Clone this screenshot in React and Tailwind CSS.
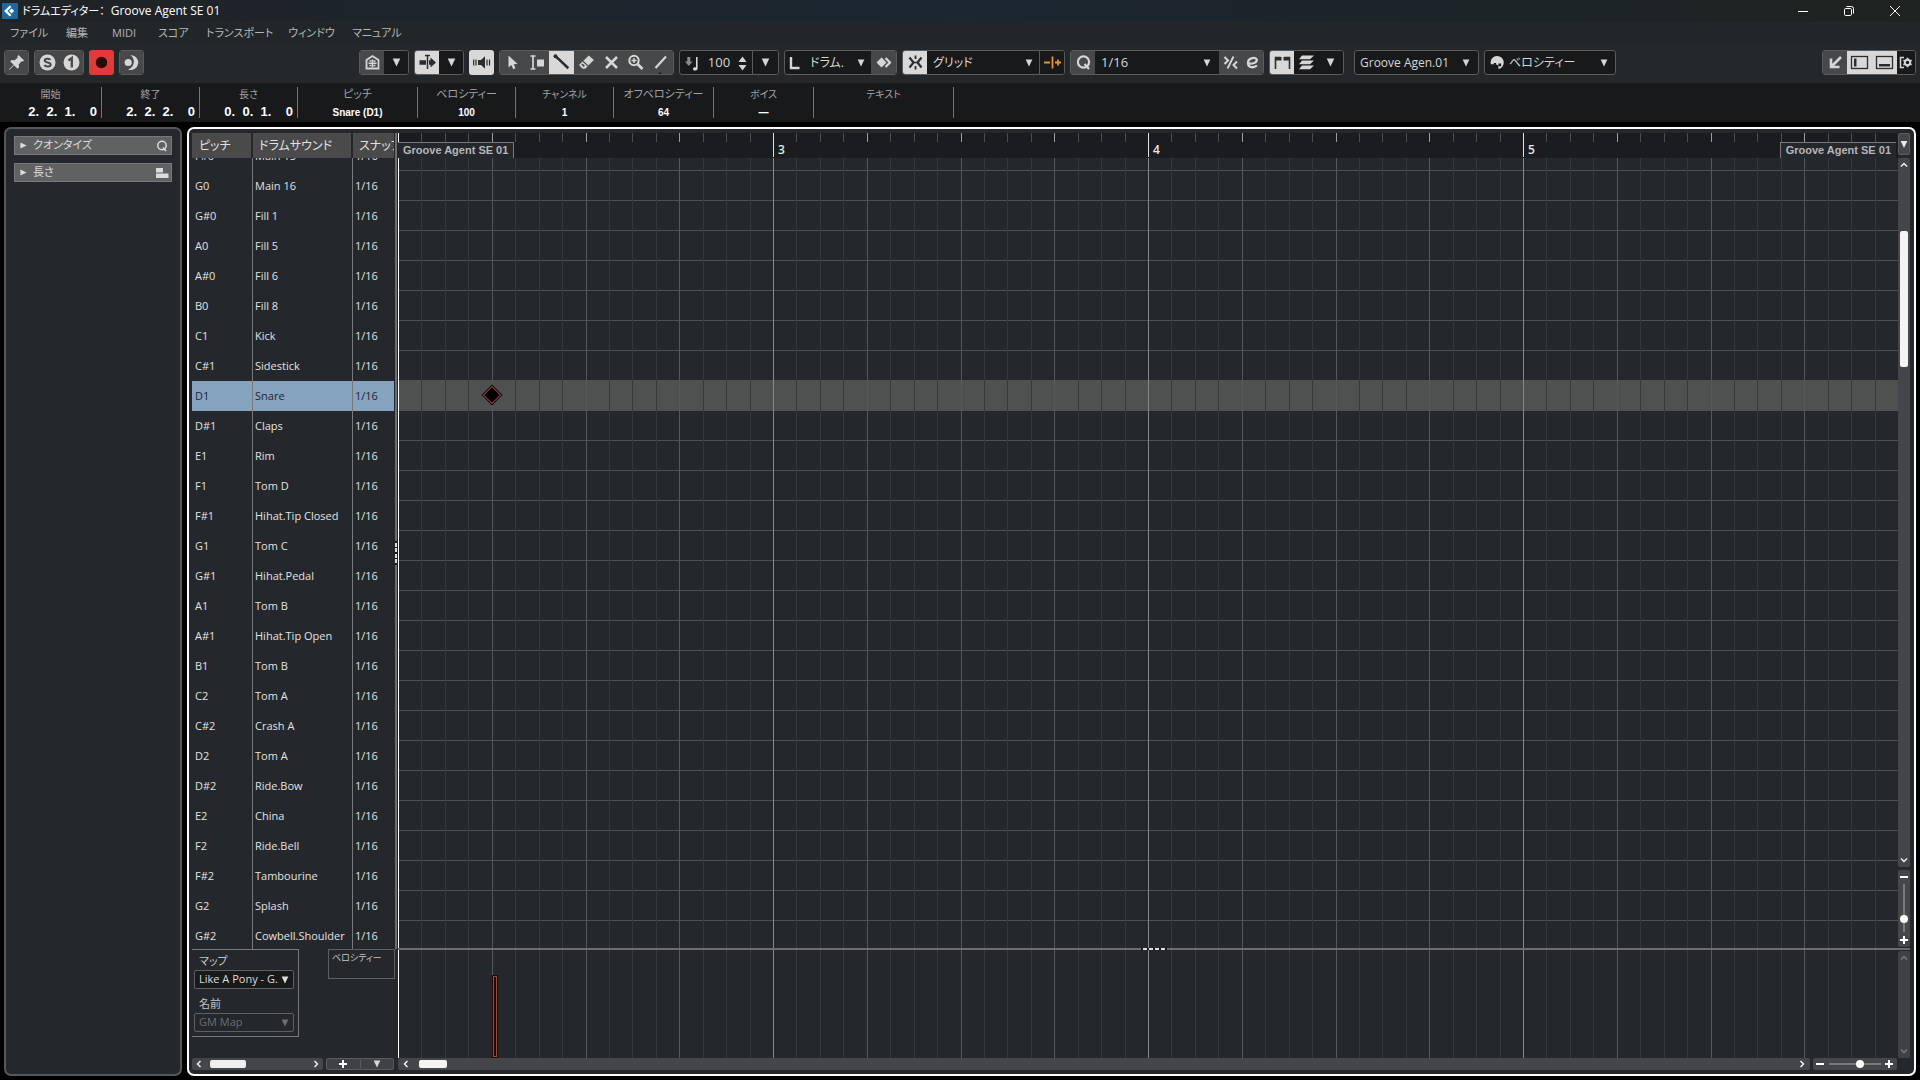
import React, { useLayoutEffect, useRef, useState } from 'react';

const DRUMS = [
    ['F#0', 'Main 15'],
    ['G0', 'Main 16'],
    ['G#0', 'Fill 1'],
    ['A0', 'Fill 5'],
    ['A#0', 'Fill 6'],
    ['B0', 'Fill 8'],
    ['C1', 'Kick'],
    ['C#1', 'Sidestick'],
    ['D1', 'Snare'],
    ['D#1', 'Claps'],
    ['E1', 'Rim'],
    ['F1', 'Tom D'],
    ['F#1', 'Hihat.Tip Closed'],
    ['G1', 'Tom C'],
    ['G#1', 'Hihat.Pedal'],
    ['A1', 'Tom B'],
    ['A#1', 'Hihat.Tip Open'],
    ['B1', 'Tom B'],
    ['C2', 'Tom A'],
    ['C#2', 'Crash A'],
    ['D2', 'Tom A'],
    ['D#2', 'Ride.Bow'],
    ['E2', 'China'],
    ['F2', 'Ride.Bell'],
    ['F#2', 'Tambourine'],
    ['G2', 'Splash'],
    ['G#2', 'Cowbell.Shoulder'],
];

const MENUS = [
    { name: 'ファイル', width: 'w-[56px]' },
    { name: '編集', width: 'w-[46px]' },
    { name: 'MIDI', width: 'w-[46px]' },
    { name: 'スコア', width: 'w-[48px]' },
    { name: 'トランスポート', width: 'w-[82px]' },
    { name: 'ウィンドウ', width: 'w-[64px]' },
    { name: 'マニュアル', width: 'w-[64px]' },
];

const INFO = [
    { id: 'start', label: '開始', value: '2.  2.  1.    0', width: 'w-[102px]', time: true, size: 'text-[10px]' },
    { id: 'end', label: '終了', value: '2.  2.  2.    0', width: 'w-[98px]', time: true, size: 'text-[10px]' },
    { id: 'length', label: '長さ', value: '0.  0.  1.    0', width: 'w-[98px]', time: true, size: 'text-[10px]' },
    { id: 'pitch', label: 'ピッチ', value: 'Snare (D1)', width: 'w-[120px]', size: 'text-[11px]' },
    { id: 'velocity', label: 'ベロシティー', value: '100', width: 'w-[98px]', size: 'text-[11px]' },
    { id: 'channel', label: 'チャンネル', value: '1', width: 'w-[98px]', size: 'text-[10px]' },
    { id: 'offvel', label: 'オフベロシティー', value: '64', width: 'w-[100px]', size: 'text-[11px]' },
    { id: 'voice', label: 'ボイス', value: '—', width: 'w-[100px]', size: 'text-[10px]' },
    { id: 'text', label: 'テキスト', value: '', width: 'w-[140px]', size: 'text-[10px]' },
];

const STEPS = Array.from({ length: 64 }, (_, i) => i);
const NOTE_STEP = 4;
const LIST_SCROLL = 17;

const Icon = ({ children, className = 'h-[25px] w-[25px]', box = '0 0 25 25' }) => (
    <svg viewBox={box} className={`shrink-0 ${className}`} fill="currentColor" aria-hidden="true">
        {children}
    </svg>
);

const Caret = ({ className = 'h-[9px] w-[9px]' }) => (
    <svg viewBox="0 0 9 9" className={className} fill="currentColor" aria-hidden="true">
        <path d="M0.7 0.5h7.6L4.5 8.5z" />
    </svg>
);

const Group = ({ width, children }) => (
    <div className={`flex h-[25px] shrink-0 overflow-hidden rounded-[3px] border border-[#5a5b5d] bg-[#18191b] ${width}`}>
        {children}
    </div>
);

const ToolButton = ({ label, tone = 'gray', className = 'flex-1', children }) => {
    const tones = {
        gray: 'bg-[#47484a] text-[#d6d6d6]',
        light: 'bg-[#d8d8d8] text-[#2b2c2e]',
        dark: 'bg-[#18191b] text-[#d6d6d6]',
        red: 'bg-[#e23a38] text-[#2a0808]',
    };
    return (
        <button type="button" aria-label={label} title={label} className={`flex items-center justify-center overflow-hidden ${tones[tone]} ${className}`}>
            {children}
        </button>
    );
};

const Picker = ({ label, options, className = 'flex-1', textSize = 'text-[13px]', pad = 'pl-1', disabled = false, caret = 'mr-2' }) => (
    <label className={`grid min-w-0 items-center ${className}`}>
        <select
            aria-label={label}
            disabled={disabled}
            className={`col-start-1 row-start-1 h-full w-full min-w-0 appearance-none bg-transparent outline-none ${pad} ${textSize}`}
        >
            {options.map((o) => (
                <option key={o}>{o}</option>
            ))}
        </select>
        <span className={`pointer-events-none col-start-1 row-start-1 justify-self-end ${caret}`}>
            <Caret className="h-2 w-2" />
        </span>
    </label>
);

const TitleBar = () => (
    <header className="flex h-[22px] items-center bg-gradient-to-r from-[#1f2326] via-[#1b2631] to-[#1e2220] pl-[2px] text-white">
        <Icon box="0 0 16 16" className="h-4 w-4 rounded-[1px]">
            <rect width="16" height="16" fill="#1f6a9c" />
            <path d="M8.6 3.2 3.8 8l4.8 4.8" fill="none" stroke="#fff" strokeWidth="2.3" />
            <path d="M9.6 5.4 12.2 8l-2.6 2.6L7 8z" fill="#fff" />
        </Icon>
        <h1 className="ml-1 flex items-center gap-[6px] whitespace-nowrap text-[12px]">
            <span className="text-[11px]">ドラムエディター：</span>
            <span>Groove Agent SE 01</span>
        </h1>
        <div className="ml-auto flex items-center pr-[2px]">
            <button type="button" aria-label="最小化" className="flex w-[46px] justify-center">
                <Icon box="0 0 10 10" className="h-[10px] w-[10px]"><path d="M0 5h10v1H0z" /></Icon>
            </button>
            <button type="button" aria-label="元に戻す" className="flex w-[46px] justify-center">
                <Icon box="0 0 10 10" className="h-[10px] w-[10px]">
                    <rect x="0.5" y="2.5" width="7" height="7" rx="1.2" fill="none" stroke="currentColor" />
                    <path d="M2.5 0.5h5a2 2 0 0 1 2 2v5" fill="none" stroke="currentColor" />
                </Icon>
            </button>
            <button type="button" aria-label="閉じる" className="flex w-[46px] justify-center">
                <Icon box="0 0 10 10" className="h-[10px] w-[10px]"><path d="m0 0 10 10M10 0 0 10" stroke="currentColor" /></Icon>
            </button>
        </div>
    </header>
);

const MenuBar = () => (
    <nav className="flex h-[22px] items-center bg-[#222629] pl-[10px] text-[#b4b6b8]">
        {MENUS.map((m) => (
            <button key={m.name} type="button" className={`whitespace-nowrap text-left text-[11px] ${m.width}`}>
                {m.name}
            </button>
        ))}
    </nav>
);

const Toolbar = () => (
    <div className="flex h-[39px] items-start gap-[5px] bg-[#25282b] px-1 pt-[6px] text-[#d6d6d6]">
        <Group width="w-[25px]">
            <ToolButton label="固定">
                <Icon>
                    <path d="m14.5 5 5.6 5.6-1.4 1-1-.3-2.9 2.9.2 3.3-1.5 1.2-3.5-3.5-4.5 4.6-.5-.5 4.6-4.5-3.3-3.3 1.3-1.4 3.200.2 2.9-2.9-.3-1.1z" />
                </Icon>
            </ToolButton>
        </Group>
        <Group width="w-[50px]">
            <ToolButton label="ソロ">
                <Icon>
                    <circle cx="12.5" cy="12.5" r="8" />
                    <path d="M15.5 9.800c-1-1.5-5.8-1.7-5.8.7 0 2.5 6 1.3 6 4 0 2.6-5 2.5-6.4.6" fill="none" stroke="#47484a" strokeWidth="2" />
                </Icon>
            </ToolButton>
            <ToolButton label="フィードバック">
                <Icon>
                    <circle cx="12.5" cy="12.5" r="8" />
                    <path d="M9.5 10.5 12.8 8v9.5" fill="none" stroke="#47484a" strokeWidth="2.3" />
                </Icon>
            </ToolButton>
        </Group>
        <ToolButton label="録音" tone="red" className="h-[25px] w-[25px] shrink-0 rounded-[3px]">
            <Icon><circle cx="12.5" cy="12.5" r="5.7" /></Icon>
        </ToolButton>
        <Group width="w-[25px]">
            <ToolButton label="レトロスペクティブ録音">
                <Icon>
                    <path d="M11.5 5.2a7.4 7.4 0 1 1-2.5 14.2 8 8 0 0 0 2.5-14.2z" />
                    <circle cx="9.2" cy="12.5" r="3.6" />
                </Icon>
            </ToolButton>
        </Group>

        <div className="w-[205px]" />

        <Group width="w-[50px]">
            <ToolButton label="エディターツール">
                <Icon>
                    <path d="M6.5 18.5V10l6-4 6 4v8.5z" fill="none" stroke="currentColor" strokeWidth="1.8" />
                    <path d="M9.5 11h2M13.5 11h2M9.5 15.5h2M13.500 15.500h2M8.500 13.200h8M12.500 9.500v8" stroke="currentColor" strokeWidth="1.4" />
                </Icon>
            </ToolButton>
            <ToolButton label="ツールメニュー" tone="dark"><Caret /></ToolButton>
        </Group>
        <Group width="w-[50px]">
            <ToolButton label="自動スクロール" tone="light">
                <Icon>
                    <path d="M4.5 10.2h6.5v4.6H4.5zM14 10.2h1.5V7.5l5.5 5-5.5 5v-2.7H14z" />
                    <path d="M12.5 6v13M10 5.5h5" stroke="currentColor" strokeWidth="1.5" />
                </Icon>
            </ToolButton>
            <ToolButton label="スクロール設定" tone="dark"><Caret /></ToolButton>
        </Group>
        <ToolButton label="試聴" tone="light" className="h-[25px] w-[25px] shrink-0 rounded-[3px]">
            <Icon>
                <path d="M9 10h3l4-3.800v12.600L12 15H9z" />
                <path d="M4.7 9.5v6M7 9.5v6M18 9.5v6M20.5 9.5v6" stroke="currentColor" strokeWidth="1.2" />
            </Icon>
        </ToolButton>
        <Group width="w-[175px]">
            <ToolButton label="選択">
                <Icon><path d="M8.5 5.5v12l2.9-2.4 1.8 4.1 2.3-1-1.8-4 3.8-.3z" /></Icon>
            </ToolButton>
            <ToolButton label="トリム">
                <Icon>
                    <path d="M5.5 6h5M5.500 19h5M8 6v13" fill="none" stroke="currentColor" strokeWidth="1.7" />
                    <path d="M12 9.500h7v7h-7z" />
                </Icon>
            </ToolButton>
            <ToolButton label="ドラムスティック" tone="light">
                <Icon>
                    <circle cx="6.5" cy="6.3" r="2" />
                    <path d="m6.5 6.3 3 2.6 9.8 9.3" fill="none" stroke="currentColor" strokeWidth="2.6" />
                </Icon>
            </ToolButton>
            <ToolButton label="削除">
                <Icon>
                    <path d="m14.8 5.5 5 4.6-8.6 8.6H8.600L5 15z" />
                    <path d="m9 11.2 5 4.7" stroke="#47484a" strokeWidth="1.2" />
                    <path d="m7.3 14.8 2.4 2.2 1.2-1.2-2.4-2.2z" fill="#47484a" />
                </Icon>
            </ToolButton>
            <ToolButton label="ミュート">
                <Icon><path d="m7 7 11 11M18 7 7 18" stroke="currentColor" strokeWidth="2.5" /></Icon>
            </ToolButton>
            <ToolButton label="ズーム">
                <Icon>
                    <circle cx="11" cy="10.5" r="4.7" fill="none" stroke="currentColor" strokeWidth="2" />
                    <path d="M11 8v5M8.5 10.5h5" stroke="currentColor" strokeWidth="1.5" />
                    <path d="m14.5 14 5 5" stroke="currentColor" strokeWidth="2.8" />
                </Icon>
            </ToolButton>
            <ToolButton label="ライン">
                <Icon>
                    <path d="M18 6.5 7.5 18" stroke="currentColor" strokeWidth="2.2" />
                    <path d="m12 22 3 3H9z" fill="#18191b" />
                </Icon>
            </ToolButton>
        </Group>
        <Group width="w-[100px]">
            <Icon>
                <path d="M7.3 6v4.5H5l3.8 4.5 3.8-4.5h-2.300V6z" opacity=".6" />
                <path d="M16 6h1.600v11.500c0 2.500-4.600 2.700-4.600.5 0-1.500 1.800-2 3-1.500z" />
            </Icon>
            <input aria-label="挿入ベロシティー" defaultValue="100" className="w-[28px] min-w-0 bg-transparent text-center text-[13px] outline-none" />
            <Icon className="h-[25px] w-[19px]" box="0 0 17 25">
                <path d="M8.5 5.5 12.5 11h-8zM8.5 19.5l4-5.5h-8z" />
            </Icon>
            <ToolButton label="ベロシティーメニュー" tone="dark" className="flex-1 border-l border-[#5a5b5d]"><Caret /></ToolButton>
        </Group>
        <Group width="w-[113px]">
            <Icon className="h-[23px] w-[19px]" box="0 0 19 23">
                <path d="M6 6v11h8.5" fill="none" stroke="currentColor" strokeWidth="2.4" />
            </Icon>
            <Picker label="ノートの長さ" options={['ドラム.']} textSize="text-[12px]" pad="pl-[6px]" caret="mr-[6px]" />
            <ToolButton label="ドラムマップの長さ" className="w-[25px]">
                <Icon>
                    <path d="m10.5 7.5 5 5-5 5-5-5z" />
                    <path d="m14.5 8 4.5 4.5-4.5 4.5" fill="none" stroke="currentColor" strokeWidth="2.2" />
                </Icon>
            </ToolButton>
        </Group>
        <Group width="w-[163px]">
            <ToolButton label="スナップ" tone="light" className="w-[24px]">
                <Icon>
                    <path d="M12.5 5.5v3.5M12.5 16v3.500" stroke="currentColor" strokeWidth="1.8" />
                    <path d="m6.5 7.500 4 5-4 5M18.500 7.500l-4 5 4 5" fill="none" stroke="currentColor" strokeWidth="2.200" />
                    <path d="M9 12.500h7" stroke="currentColor" strokeWidth="1.500" />
                </Icon>
            </ToolButton>
            <Picker label="スナップタイプ" options={['グリッド']} textSize="text-[12px]" pad="pl-[6px]" caret="mr-[6px]" />
            <ToolButton label="グリッドの間隔" tone="dark" className="w-[25px] border-l border-[#5a5b5d]">
                <Icon>
                    <path d="M4 12.5h6M12.5 6.5v12M15 12.5h6M18 9.5v6" stroke="#e8942f" strokeWidth="1.8" />
                </Icon>
            </ToolButton>
        </Group>
        <Group width="w-[194px]">
            <ToolButton label="クオンタイズを適用" className="w-[24px]">
                <Icon>
                    <circle cx="12.5" cy="12" r="5.6" fill="none" stroke="currentColor" strokeWidth="2.2" />
                    <path d="m13.5 14 4.5 5" stroke="currentColor" strokeWidth="2.2" />
                </Icon>
            </ToolButton>
            <Picker label="クオンタイズ値" options={['1/16']} pad="pl-[6px]" caret="mr-2" />
            <ToolButton label="ソフトクオンタイズ" className="w-[22px]">
                <Icon>
                    <path d="M15.5 6.5 9.5 18.5" stroke="currentColor" strokeWidth="1.8" />
                    <path d="m6.5 7 3.5 3.5L6.500 14M19 11.500 15.500 15l3.500 3.500" fill="none" stroke="currentColor" strokeWidth="2" />
                </Icon>
            </ToolButton>
            <ToolButton label="クオンタイズパネル" className="w-[22px]">
                <Icon>
                    <path d="M8 13.500c5 .5 8.800-.8 8.800-3.400 0-3.500-8.800-2.800-8.800 3 0 5.500 6.500 4.600 9 2.400" fill="none" stroke="currentColor" strokeWidth="2.3" />
                </Icon>
            </ToolButton>
        </Group>
        <Group width="w-[75px]">
            <ToolButton label="パートの境界線を表示" tone="light">
                <Icon>
                    <path d="M5.5 19V7.500h5M19.500 19V7.500h-5" fill="none" stroke="currentColor" strokeWidth="1.6" />
                    <path d="M6 7h5.500v3.500H6zM13.500 7H19v3.500h-5.500z" />
                </Icon>
            </ToolButton>
            <ToolButton label="アクティブなパートのみ編集" tone="dark">
                <Icon>
                    <path d="M8 5.500h12l-4 3.800H5zM8 10.500h12l-4 3.800H5zM8 15.500h12l-4 3.800H5z" />
                </Icon>
            </ToolButton>
            <ToolButton label="パートメニュー" tone="dark"><Caret /></ToolButton>
        </Group>
        <div className="ml-[5px] flex shrink-0">
            <Group width="w-[125px]">
                <Picker label="編集するパート" options={['Groove Agen.01']} textSize="text-[12px]" pad="pl-[5px]" />
            </Group>
        </div>
        <Group width="w-[132px]">
            <Icon className="h-[23px] w-[24px]">
                <path d="M5.500 12.500a7.200 7.200 0 1 1 8.500 7.100v-3.800l-3-1.300H5.800z" />
                <path d="M14 13.500h3v3h-3zM9 13h2.500v2H9z" fill="#18191b" />
            </Icon>
            <Picker label="イベントの色" options={['ベロシティー']} textSize="text-[12px]" pad="pl-0" caret="mr-[7px]" />
        </Group>
        <div className="ml-auto flex shrink-0">
            <Group width="w-[94px]">
                <ToolButton label="ロワーゾーンで開く" className="w-[24px]">
                    <Icon><path d="M18 7 8.500 16.500M8 8.500V17h8.500" fill="none" stroke="currentColor" strokeWidth="2.6" /></Icon>
                </ToolButton>
                <ToolButton label="左ゾーン" tone="light" className="w-[25px]">
                    <Icon>
                        <rect x="4.5" y="6.5" width="16" height="12" fill="none" stroke="currentColor" strokeWidth="1.3" />
                        <path d="M7 8.500h2.500v8H7z" />
                    </Icon>
                </ToolButton>
                <ToolButton label="下ゾーン" tone="light" className="w-[25px]">
                    <Icon>
                        <rect x="4.5" y="6.5" width="16" height="12" fill="none" stroke="currentColor" strokeWidth="1.3" />
                        <path d="M7 14h11v2.500H7z" />
                    </Icon>
                </ToolButton>
                <ToolButton label="ツールバー設定" tone="dark">
                    <Icon className="h-[25px] w-[18px]" box="0 0 18 25">
                        <path d="M7 7.500H3.500v10H7" fill="none" stroke="currentColor" strokeWidth="1.5" />
                        <circle cx="10.5" cy="12.5" r="2.7" fill="none" stroke="currentColor" strokeWidth="1.900" />
                        <path d="M10.500 7.800v2M10.500 15.200v2M6.400 10.200l1.700 1M12.900 13.800l1.700 1M6.400 14.800l1.700-1M12.900 11.200l1.700-1" stroke="currentColor" strokeWidth="1.8" />
                    </Icon>
                </ToolButton>
            </Group>
        </div>
    </div>
);

const InfoLine = () => (
    <div className="flex h-[39px] bg-[#18191b] py-1">
        {INFO.map((f) => (
            <div key={f.id} className={`flex shrink-0 flex-col items-center border-r border-[#737476] ${f.width}`}>
                <label htmlFor={f.id} className={`h-[14px] whitespace-nowrap leading-[14px] text-[#a2a3a4] ${f.size}`}>
                    {f.label}
                </label>
                <input
                    id={f.id}
                    defaultValue={f.value}
                    className={`mt-[3px] h-4 w-full shrink-0 bg-transparent font-['Liberation_Sans','Noto_Sans_CJK_JP',sans-serif] font-bold text-white outline-none ${f.time ? 'pr-1 text-right text-[13px]' : 'text-center text-[10px]'}`}
                />
            </div>
        ))}
    </div>
);

const Inspector = () => (
    <aside className="flex w-[178px] shrink-0 flex-col gap-2 rounded-[7px] border-2 border-[#55575a] bg-[#24272b] px-2 pt-[7px] text-[#dcdcdc]">
        <button type="button" className="flex h-[19px] items-center border border-[#77797b] bg-[#5f6163] pl-[5px] pr-[2px] text-[11px]">
            <Caret className="h-[7px] w-[7px] -rotate-90" />
            <span className="ml-[6px]">クオンタイズ</span>
            <Icon className="ml-auto h-[14px] w-[14px]" box="0 0 14 14">
                <circle cx="7" cy="6.5" r="4.2" fill="none" stroke="currentColor" strokeWidth="1.5" />
                <path d="m8 8.500 3 3.500" stroke="currentColor" strokeWidth="1.6" />
            </Icon>
        </button>
        <button type="button" className="flex h-[19px] items-center border border-[#77797b] bg-[#5f6163] pl-[5px] pr-[2px] text-[11px]">
            <Caret className="h-[7px] w-[7px] -rotate-90" />
            <span className="ml-[6px]">長さ</span>
            <Icon className="ml-auto h-[14px] w-[14px]" box="0 0 14 14">
                <path d="M1 2h7v4.500H1zM1 7.500h12.500V12H1z" />
            </Icon>
        </button>
    </aside>
);

const DrumList = ({ selected, onSelect, scrollRef }) => (
    <div ref={scrollRef} className="min-h-0 flex-1 overflow-hidden pr-px">
        <table className="w-full table-fixed border-separate border-spacing-0 text-left text-[11px] text-[#e2e2e2]">
            <colgroup>
                <col className="w-[61px]" />
                <col className="w-[100px]" />
                <col />
            </colgroup>
            <thead className="sticky top-0 z-10">
                <tr className="h-[25px] bg-[#4a4a4b] text-[12px]">
                    <th className="border-r-2 border-[#24272b] py-0 pl-[7px] font-normal">ピッチ</th>
                    <th className="border-r-2 border-[#24272b] py-0 pl-[6px] font-normal">ドラムサウンド</th>
                    <th className="overflow-hidden whitespace-nowrap py-0 pl-[6px] font-normal">スナップ</th>
                </tr>
            </thead>
            <tbody>
                {DRUMS.map(([pitch, name]) => (
                    <tr
                        key={pitch}
                        onClick={() => onSelect(pitch)}
                        className={`h-[30px] ${pitch === selected ? 'bg-[#86a3c0] text-[#1d2733]' : ''}`}
                    >
                        <td className="border-r border-[#77797b] py-0 pl-[3px]">{pitch}</td>
                        <td className="whitespace-nowrap border-r border-[#77797b] py-0 pl-[2px]">{name}</td>
                        <td className="py-0 pl-[2px]">1/16</td>
                    </tr>
                ))}
            </tbody>
        </table>
    </div>
);

const MapPanel = () => (
    <div className="flex h-[109px] items-start justify-between text-[#c4c5c6]">
        <div className="flex h-[88px] w-[107px] flex-col border-y border-r border-[#77797b] pl-[2px]">
            <span className="pl-[5px] pt-[2px] text-[11px] leading-[18px]">マップ</span>
            <div className="flex h-[19px] w-[100px] rounded-[2px] border border-[#5d5f61] bg-[#18191b] text-[#dcdcdc]">
                <Picker label="マップ" options={['Like A Pony - G.']} textSize="text-[11px]" pad="pl-1" caret="mr-1" />
            </div>
            <span className="pl-[5px] pt-[5px] text-[11px] leading-[19px]">名前</span>
            <div className="flex h-[19px] w-[100px] rounded-[2px] border border-[#5d5f61] text-[#6d6f71]">
                <Picker label="名前" options={['GM Map']} textSize="text-[11px]" pad="pl-1" caret="mr-1" disabled />
            </div>
        </div>
        <button type="button" className="flex h-[30px] w-[67px] border border-[#5d5f61] pl-[3px] text-[9px] leading-[15px]">
            ベロシティー
        </button>
    </div>
);

const Arrow = ({ dir, label, dim }) => {
    const paths = {
        left: 'M6.5 2l-3 3 3 3',
        right: 'M3.5 2l3 3-3 3',
        up: 'M2 6.5l3-3 3 3',
        down: 'M2 3.5l3 3 3-3',
    };
    return (
        <button type="button" aria-label={label} className={`flex h-3 w-3 shrink-0 items-center justify-center ${dim ? 'text-[#77797b]' : 'text-[#f0f0f0]'}`}>
            <svg viewBox="0 0 10 10" className="h-[10px] w-[10px]" fill="none" stroke="currentColor" strokeWidth="1.5" aria-hidden="true">
                <path d={paths[dir]} />
            </svg>
        </button>
    );
};

const ZoomSign = ({ plus, label, className = '' }) => (
    <button type="button" aria-label={label} className={`flex shrink-0 items-center justify-center text-white ${className}`}>
        <svg viewBox="0 0 8 8" className="h-2 w-2" stroke="currentColor" strokeWidth="2" aria-hidden="true">
            <path d={plus ? 'M0 4h8M4 0v8' : 'M0 4h8'} />
        </svg>
    </button>
);

// beat and bar lines shared by the ruler, the note grid and the controller lane
const StepLines = ({ ticks = false }) => (
    <div className={`pointer-events-none col-start-1 row-start-1 grid grid-cols-[repeat(64,minmax(0,1fr))] ${ticks ? 'h-full' : ''}`}>
        {STEPS.map((i) => {
            let tone = ticks ? 'border-[#4c4e51]' : 'border-[#34383b]';
            if (i % 4 === 0) tone = ticks ? 'border-[#999b9d]' : 'border-[#54585b]';
            if (i % 16 === 0) tone = ticks ? 'border-[#e0e0e0]' : 'border-[#85888a]';
            if (i === 0) tone = 'border-white';
            const height = ticks ? (i % 16 === 0 ? 'h-6' : 'h-[9px]') : 'h-full';
            return (
                <div key={i} className={`border-l text-[12px] font-semibold leading-[33px] text-[#e6e6e6] ${height} ${tone}`}>
                    {ticks && i > 0 && i % 16 === 0 && <span className="pl-1">{i / 16 + 2}</span>}
                </div>
            );
        })}
    </div>
);

const PartTag = ({ side }) => (
    <span
        className={`z-10 col-start-1 row-start-1 h-4 self-end border-t border-[#77797b] bg-[#24272b] px-[5px] font-['Liberation_Sans',sans-serif] text-[11px] font-bold leading-[15px] text-[#b5b6b7] ${side}`}
    >
        Groove Agent SE 01
    </span>
);

const NoteGrid = ({ selected, scrollRef }) => (
    <div ref={scrollRef} className="min-h-0 flex-1 overflow-hidden bg-[#24272b]">
        <div className="grid">
            <div className="col-start-1 row-start-1">
                {DRUMS.map(([pitch]) => (
                    <div key={pitch} className={`h-[30px] border-b border-[#4c5053] ${pitch === selected ? 'bg-[#4f5151]' : ''}`} />
                ))}
            </div>
            <StepLines />
            <div className="col-start-1 row-start-1 grid grid-cols-[repeat(64,minmax(0,1fr))]">
                <div className="relative col-start-5">
                    <svg viewBox="0 0 22 22" className="absolute -left-[11px] top-[243px] h-[22px] w-[22px]" aria-label="D1 Snare">
                        <path d="M11 .5 21.5 11 11 21.5.5 11z" fill="#0d0405" />
                        <path d="M11 2.5 19.5 11 11 19.5 2.5 11z" fill="#000" stroke="#8c3440" strokeWidth="1.2" />
                    </svg>
                </div>
            </div>
        </div>
    </div>
);

const ControllerLane = () => (
    <div className="grid min-w-0 flex-1 bg-[#24272b]">
        <StepLines />
        <div className="col-start-1 row-start-1 grid grid-cols-[repeat(64,minmax(0,1fr))] items-end">
            <div className="col-start-5">
                <div className="h-[83px] w-[6px] border border-[#2a0606] bg-[#94503f] p-px">
                    <div className="h-full w-full bg-[#1c0a08]" />
                </div>
            </div>
        </div>
    </div>
);

const App = () => {
    const [selected, setSelected] = useState('D1');
    const listRef = useRef(null);
    const gridRef = useRef(null);

    useLayoutEffect(() => {
        listRef.current.scrollTop = LIST_SCROLL;
        gridRef.current.scrollTop = LIST_SCROLL;
    }, []);

    return (
        <div className="flex h-screen flex-col overflow-hidden bg-black font-['Open_Sans','Noto_Sans_CJK_JP',sans-serif] [font-feature-settings:'palt']">
            <TitleBar />
            <MenuBar />
            <Toolbar />
            <InfoLine />
            <main className="flex min-h-0 flex-1 gap-[5px] px-1 pb-1 pt-[5px]">
                <Inspector />
                <section className="flex min-w-0 flex-1 rounded-[7px] border-2 border-white bg-[#24272b] py-1 pl-[3px] pr-1">
                    <div className="flex w-[203px] shrink-0 flex-col">
                        <DrumList selected={selected} onSelect={setSelected} scrollRef={listRef} />
                        <MapPanel />
                        <div className="flex h-3 gap-[3px]">
                            <div className="flex w-[131px] items-center rounded-[2px] bg-[#454649] px-px">
                                <Arrow dir="left" label="左へ" />
                                <div className="flex-1 pl-[5px]"><div className="h-2 w-9 rounded-[2px] bg-[#efefef]" /></div>
                                <Arrow dir="right" label="右へ" />
                            </div>
                            <div className="flex w-[68px] items-center rounded-[2px] border border-[#5a5b5d] bg-[#404144] text-[#d6d6d6]">
                                <ZoomSign plus label="レーンを追加" className="h-2 flex-1 border-r border-[#5a5b5d]" />
                                <button type="button" aria-label="レーンメニュー" className="flex flex-1 justify-center"><Caret className="h-2 w-2" /></button>
                            </div>
                        </div>
                    </div>
                    <div className="mb-[121px] flex w-[3px] shrink-0 items-center border-r border-[#24272b] bg-[#6b6d6f] pt-6">
                        <div className="flex h-[24px] w-[2px] flex-col justify-around bg-[#18191b] py-px">
                            <span className="h-1 bg-[#dcdcdc]" />
                            <span className="h-1 bg-[#dcdcdc]" />
                            <span className="h-1 bg-[#dcdcdc]" />
                            <span className="h-1 bg-[#dcdcdc]" />
                        </div>
                    </div>
                    <div className="flex min-w-0 flex-1 flex-col">
                        <div className="flex min-h-0 flex-1">
                            <div className="flex min-w-0 flex-1 flex-col">
                                <div className="grid h-[25px] shrink-0 bg-[#1b1c20]">
                                    <StepLines ticks />
                                    <PartTag side="justify-self-start border-r" />
                                    <PartTag side="mr-[2px] justify-self-end border-l" />
                                </div>
                                <NoteGrid selected={selected} scrollRef={gridRef} />
                            </div>
                            <div className="flex w-3 shrink-0 flex-col gap-[3px] pb-px">
                                <button type="button" aria-label="ルーラーの形式" className="flex h-[22px] w-3 shrink-0 items-center justify-center rounded-[2px] border border-[#5a5b5d] bg-[#454649] text-[#e6e6e6]">
                                    <Caret className="h-[9px] w-2 shrink-0" />
                                </button>
                                <div className="flex flex-1 flex-col items-center rounded-[2px] bg-[#454649] py-px">
                                    <Arrow dir="up" label="上へ" />
                                    <div className="flex-1 pt-[60px]"><div className="h-[136px] w-2 rounded-[2px] bg-[#f4f4f4]" /></div>
                                    <Arrow dir="down" label="下へ" />
                                </div>
                                <div className="flex h-[77px] flex-col items-center rounded-[2px] bg-[#454649]">
                                    <ZoomSign label="縦に縮小" className="h-[14px]" />
                                    <input
                                        type="range"
                                        aria-label="縦ズーム"
                                        defaultValue="78"
                                        className="h-[48px] w-3 appearance-none bg-[linear-gradient(#77797b,#77797b)] bg-[length:2px_100%] bg-center bg-no-repeat [writing-mode:vertical-lr] [&::-webkit-slider-thumb]:h-2 [&::-webkit-slider-thumb]:w-2 [&::-webkit-slider-thumb]:appearance-none [&::-webkit-slider-thumb]:rounded-full [&::-webkit-slider-thumb]:bg-white"
                                    />
                                    <ZoomSign plus label="縦に拡大" className="h-[15px]" />
                                </div>
                            </div>
                        </div>
                        <div className="flex h-[2px] shrink-0 justify-center bg-[#6b6d6f]">
                            <div className="flex w-[26px] justify-around bg-[#18191b] px-px">
                                <span className="w-1 bg-[#dcdcdc]" />
                                <span className="w-1 bg-[#dcdcdc]" />
                                <span className="w-1 bg-[#dcdcdc]" />
                                <span className="w-1 bg-[#dcdcdc]" />
                            </div>
                        </div>
                        <div className="flex h-[108px] shrink-0">
                            <ControllerLane />
                            <div className="mt-px flex w-3 shrink-0 flex-col justify-between rounded-[2px] bg-[#404144] py-px">
                                <Arrow dir="up" label="レーンを上へ" dim />
                                <Arrow dir="down" label="レーンを下へ" dim />
                            </div>
                        </div>
                        <div className="flex h-3 shrink-0 gap-[3px] pr-[13px]">
                            <div className="flex flex-1 items-center rounded-[2px] bg-[#454649] px-[2px]">
                                <Arrow dir="left" label="前へ" />
                                <div className="flex-1 pl-[7px]"><div className="h-2 w-7 rounded-[2px] bg-[#f4f4f4]" /></div>
                                <Arrow dir="right" label="次へ" />
                            </div>
                            <div className="flex w-[84px] items-center rounded-[2px] bg-[#454649]">
                                <ZoomSign label="横に縮小" className="w-[14px]" />
                                <input
                                    type="range"
                                    aria-label="横ズーム"
                                    defaultValue="62"
                                    className="ml-[2px] h-3 w-[52px] appearance-none bg-[linear-gradient(#77797b,#77797b)] bg-[length:100%_2px] bg-center bg-no-repeat [&::-webkit-slider-thumb]:h-2 [&::-webkit-slider-thumb]:w-2 [&::-webkit-slider-thumb]:appearance-none [&::-webkit-slider-thumb]:rounded-full [&::-webkit-slider-thumb]:bg-white"
                                />
                                <ZoomSign plus label="横に拡大" className="w-[16px]" />
                            </div>
                        </div>
                    </div>
                </section>
            </main>
        </div>
    );
};

export default App;
